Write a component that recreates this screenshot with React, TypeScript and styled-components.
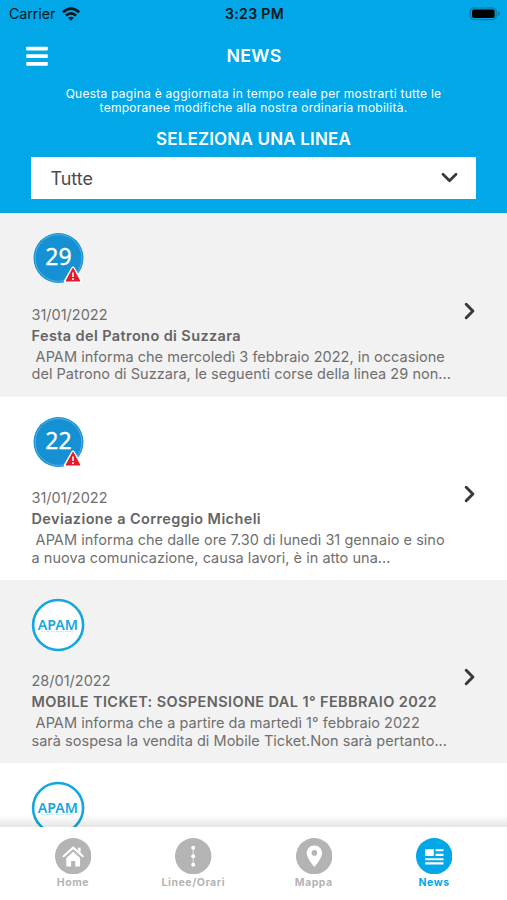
import React from "react";
import styled, { createGlobalStyle } from "styled-components";

const GlobalStyle = createGlobalStyle`
  *, *::before, *::after { box-sizing: border-box; }
  body { margin: 0; background: #fff; }
`;

const BLUE = "#02a7e7";

const Screen = styled.div`
  display: flex;
  flex-direction: column;
  width: 507px;
  height: 900px;
  overflow: hidden;
  background: #fff;
  color: #6f6f6f;
  font-family: Inter, sans-serif;
`;

const Header = styled.header`
  flex: none;
  display: flex;
  flex-direction: column;
  height: 213.4px;
  background: ${BLUE};
  color: #fff;
`;

const StatusBar = styled.div`
  display: grid;
  grid-template-columns: 1fr auto 1fr;
  align-items: center;
  height: 27px;
  padding: 0 7px 0 9px;
  color: #06161e;
`;

const Carrier = styled.div`
  display: flex;
  align-items: center;
  gap: 7px;
  font-size: 14.3px;
  letter-spacing: -0.1px;
`;

const Clock = styled.div`
  font-size: 14px;
  font-weight: 600;
  letter-spacing: 0.35px;
`;

const Battery = styled.svg`
  justify-self: end;
`;

const TitleBar = styled.div`
  display: grid;
  grid-template-columns: 60px 1fr 60px;
  align-items: center;
  height: 57px;
  padding-left: 26px;
  padding-right: 26px;
`;

const Title = styled.h1`
  margin: 0;
  font-size: 17.8px;
  font-weight: 600;
  letter-spacing: 0.3px;
  text-align: center;
  text-indent: 1px;
`;

const Intro = styled.p`
  margin: 3px 0 0;
  font-size: 12px;
  line-height: 14.4px;
  letter-spacing: 0.26px;
  text-align: center;
`;

const FilterLabel = styled.h2`
  margin: 12px 0 0;
  font-size: 17px;
  line-height: 22px;
  font-weight: 600;
  letter-spacing: 0.18px;
  text-align: center;
`;

const Select = styled.button`
  display: flex;
  flex: none;
  align-items: center;
  justify-content: space-between;
  height: 42px;
  margin: 7px 31px 0 31.4px;
  padding: 1px 18px 0 19px;
  border: 0;
  background: #fff;
  color: #4b4b50;
  font: 400 18px Inter, sans-serif;
`;

const List = styled.main`
  flex: 1;
  min-height: 0;
  overflow: hidden;
`;

const Row = styled.article<{ $shaded: boolean }>`
  display: flex;
  justify-content: space-between;
  height: 183.3px;
  padding: 19px 31px 0 31.5px;
  background: ${(p) => (p.$shaded ? "#f2f2f2" : "#fff")};
`;

const Badge = styled.svg`
  display: block;
  overflow: visible;
`;

const DateLine = styled.div`
  margin-top: 20.2px;
  font-size: 14.5px;
  line-height: 20px;
`;

const Headline = styled.h3`
  margin: 0;
  font-size: 14.5px;
  line-height: 22px;
  font-weight: 600;
  letter-spacing: 0.39px;
  white-space: nowrap;
  color: #646464;
`;

const Excerpt = styled.p`
  margin: 1.3px 0 0;
  font-size: 14.5px;
  line-height: 17.4px;
  letter-spacing: 0.03px;
  white-space: pre;
`;

const OpenArrow = styled.svg`
  flex: none;
  margin-top: 69.4px;
`;

const TabBar = styled.nav`
  position: relative;
  flex: none;
  display: grid;
  grid-template-columns: repeat(4, 120.4px);
  justify-content: center;
  height: 73.3px;
  padding-top: 11px;
  background: #fff;

  &::before {
    content: "";
    position: absolute;
    left: 0;
    right: 0;
    top: -12px;
    height: 12px;
    background: linear-gradient(rgba(0, 0, 0, 0), rgba(0, 0, 0, 0.1));
  }
`;

const Tab = styled.div<{ $active?: boolean }>`
  display: flex;
  flex-direction: column;
  align-items: center;
  color: ${(p) => (p.$active ? BLUE : "#b4b4b4")};
`;

const TabLabel = styled.span`
  margin-top: 2px;
  font-size: 10.5px;
  line-height: 14px;
  font-weight: 700;
  letter-spacing: 0.55px;
`;

const LineBadge = ({ line }: { line: string }) => (
  <Badge width="52" height="52" viewBox="0 0 52 52">
    <circle cx="26.5" cy="26" r="25" fill="#1591d3" />
    <circle cx="26.5" cy="26" r="23.4" fill="none" stroke="#62b9e6" strokeWidth="0.8" />
    <text x="26.5" y="33.2" textAnchor="middle" fill="#fff" stroke="#fff" strokeWidth="0.3" fontFamily="Noto Sans, sans-serif" fontSize="23" fontWeight="400">
      {line}
    </text>
    <path d="M41 36.4L48.4 49.2H33.6z" fill="#fff" stroke="#fff" strokeWidth="3.6" strokeLinejoin="round" />
    <path d="M41 36.6L47.6 48.9H34.4z" fill="#e41b2b" stroke="#e41b2b" strokeWidth="1.2" strokeLinejoin="round" />
    <path d="M41 40.4V45M41 46.2V47.9" stroke="#fff" strokeWidth="1.6" />
  </Badge>
);

const ApamBadge = () => (
  <Badge width="52" height="52" viewBox="0 0 52 52">
    <circle cx="26.1" cy="26" r="25" fill="#fff" stroke="#14a7df" strokeWidth="2.6" />
    <text x="25.9" y="30.6" textAnchor="middle" fill="#14a7df" fontFamily="Noto Sans, sans-serif" fontSize="14.2" fontWeight="600">
      APAM
    </text>
    <path d="M9 32.6H43" stroke="#14a7df" strokeOpacity="0.4" strokeWidth="0.8" strokeDasharray="2 1 1 1.5 3 1" />
  </Badge>
);

const NEWS = [
  {
    line: "29",
    date: "31/01/2022",
    title: "Festa del Patrono di Suzzara",
    text: "\u00a0APAM informa che mercoledì 3 febbraio 2022, in occasione\ndel Patrono di Suzzara, le seguenti corse della linea 29 non...",
  },
  {
    line: "22",
    date: "31/01/2022",
    title: "Deviazione a Correggio Micheli",
    text: "\u00a0APAM informa che dalle ore 7.30 di lunedì 31 gennaio e sino\na nuova comunicazione, causa lavori, è in atto una...",
  },
  {
    date: "28/01/2022",
    title: "MOBILE TICKET: SOSPENSIONE DAL 1° FEBBRAIO 2022",
    text: "\u00a0APAM informa che a partire da martedì 1° febbraio 2022\nsarà sospesa la vendita di Mobile Ticket.Non sarà pertanto...",
  },
];

const HomeIcon = () => (
  <>
    <path d="M8.6 18.2L18.2 9.6L27.8 18.2" fill="none" stroke="#fff" strokeWidth="2.1" strokeLinecap="round" />
    <path d="M22.9 9.8h2.7v5.2l-2.7-2.4z" fill="#fff" />
    <path d="M11.3 19.9L18.2 13.8L25.1 19.9V27.4a1 1 0 0 1-1 1H20.3V23H16.1V28.4H12.3a1 1 0 0 1-1-1z" fill="#fff" />
  </>
);

const LinesIcon = () => (
  <>
    <path d="M18.2 10V26.5" stroke="#fff" strokeOpacity="0.75" strokeWidth="0.9" />
    <circle cx="18.2" cy="9.8" r="2" fill="#fff" />
    <circle cx="18.2" cy="18.2" r="2" fill="#fff" />
    <circle cx="18.2" cy="26.7" r="2" fill="#fff" />
  </>
);

const MapIcon = () => (
  <path
    fill="#fff"
    fillRule="evenodd"
    d="M18.4 7.5c4.4 0 7.7 3.4 7.7 7.6c0 5.4-7.7 13.9-7.7 13.9S10.7 20.5 10.7 15.1c0-4.2 3.3-7.6 7.7-7.6zM18.4 12.1a2.8 2.8 0 1 0 0 5.6a2.8 2.8 0 0 0 0-5.6z"
  />
);

const NewsIcon = () => (
  <path d="M9.2 11.2h8.6v6.9H9.2zM19.6 11.2h7.9v2.1h-7.9zM19.6 15.8h7.9v2.1h-7.9zM9.2 20.2h18.3v2.1H9.2zM9.2 24.3h18.3v2.1H9.2z" fill="#fff" />
);

const TABS = [
  { label: "Home", Icon: HomeIcon },
  { label: "Linee/Orari", Icon: LinesIcon },
  { label: "Mappa", Icon: MapIcon },
  { label: "News", Icon: NewsIcon, active: true },
];

export default function App() {
  return (
    <>
      <GlobalStyle />
      <Screen>
        <Header>
          <StatusBar>
            <Carrier>
              Carrier
              <svg width="18" height="14" viewBox="0 0 18 14">
                <g fill="none" stroke="#06161e" strokeWidth="2.7">
                  <path d="M0.9 5.2Q9 -2 17.1 5.2" />
                  <path d="M3.9 8.5Q9 4.2 14.1 8.5" />
                </g>
                <path d="M6.1 10.8Q9 8.6 11.9 10.8L9 13.7z" fill="#06161e" />
              </svg>
            </Carrier>
            <Clock>3:23 PM</Clock>
            <Battery width="31" height="14" viewBox="0 0 31 14">
              <rect x="1.4" y="0.8" width="25.8" height="11.8" rx="3.8" fill="none" stroke="#0479a6" strokeWidth="1.3" />
              <rect x="3" y="2.4" width="22.6" height="8.6" rx="2" fill="#000" />
              <path d="M28.8 4.5Q30.8 5.2 30.8 6.7T28.8 8.9z" fill="#0479a6" />
            </Battery>
          </StatusBar>
          <TitleBar>
            <svg width="22" height="20" viewBox="0 0 22 20">
              <g fill="#fff">
                <rect x="0.2" y="0.7" width="21.6" height="3.8" rx="0.8" />
                <rect x="0.2" y="8.3" width="21.6" height="3.8" rx="0.8" />
                <rect x="0.2" y="15.9" width="21.6" height="3.8" rx="0.8" />
              </g>
            </svg>
            <Title>NEWS</Title>
          </TitleBar>
          <Intro>
            Questa pagina è aggiornata in tempo reale per mostrarti tutte le
            <br />
            temporanee modifiche alla nostra ordinaria mobilità.
          </Intro>
          <FilterLabel>SELEZIONA UNA LINEA</FilterLabel>
          <Select>
            Tutte
            <svg width="17" height="12" viewBox="0 0 17 12">
              <path d="M2 2.3L8.5 8.8L15 2.3" fill="none" stroke="#36393d" strokeWidth="2.7" strokeLinecap="round" strokeLinejoin="round" />
            </svg>
          </Select>
        </Header>
        <List>
          {NEWS.map((n, i) => (
            <Row key={n.title} $shaded={i % 2 === 0}>
              <div>
                {n.line ? <LineBadge line={n.line} /> : <ApamBadge />}
                <DateLine>{n.date}</DateLine>
                <Headline>{n.title}</Headline>
                <Excerpt>{n.text}</Excerpt>
              </div>
              <OpenArrow width="12" height="18" viewBox="0 0 12 18">
                <path d="M2.2 2.3L8.9 9L2.2 15.7" fill="none" stroke="#36393d" strokeWidth="3" strokeLinecap="round" strokeLinejoin="round" />
              </OpenArrow>
            </Row>
          ))}
          <Row $shaded={false}>
            <ApamBadge />
          </Row>
        </List>
        <TabBar>
          {TABS.map(({ label, Icon, active }) => (
            <Tab key={label} $active={active}>
              <svg width="36.4" height="36.4" viewBox="0 0 36.4 36.4">
                <circle cx="18.2" cy="18.2" r="18.2" fill="currentColor" />
                <Icon />
              </svg>
              <TabLabel>{label}</TabLabel>
            </Tab>
          ))}
        </TabBar>
      </Screen>
    </>
  );
}
